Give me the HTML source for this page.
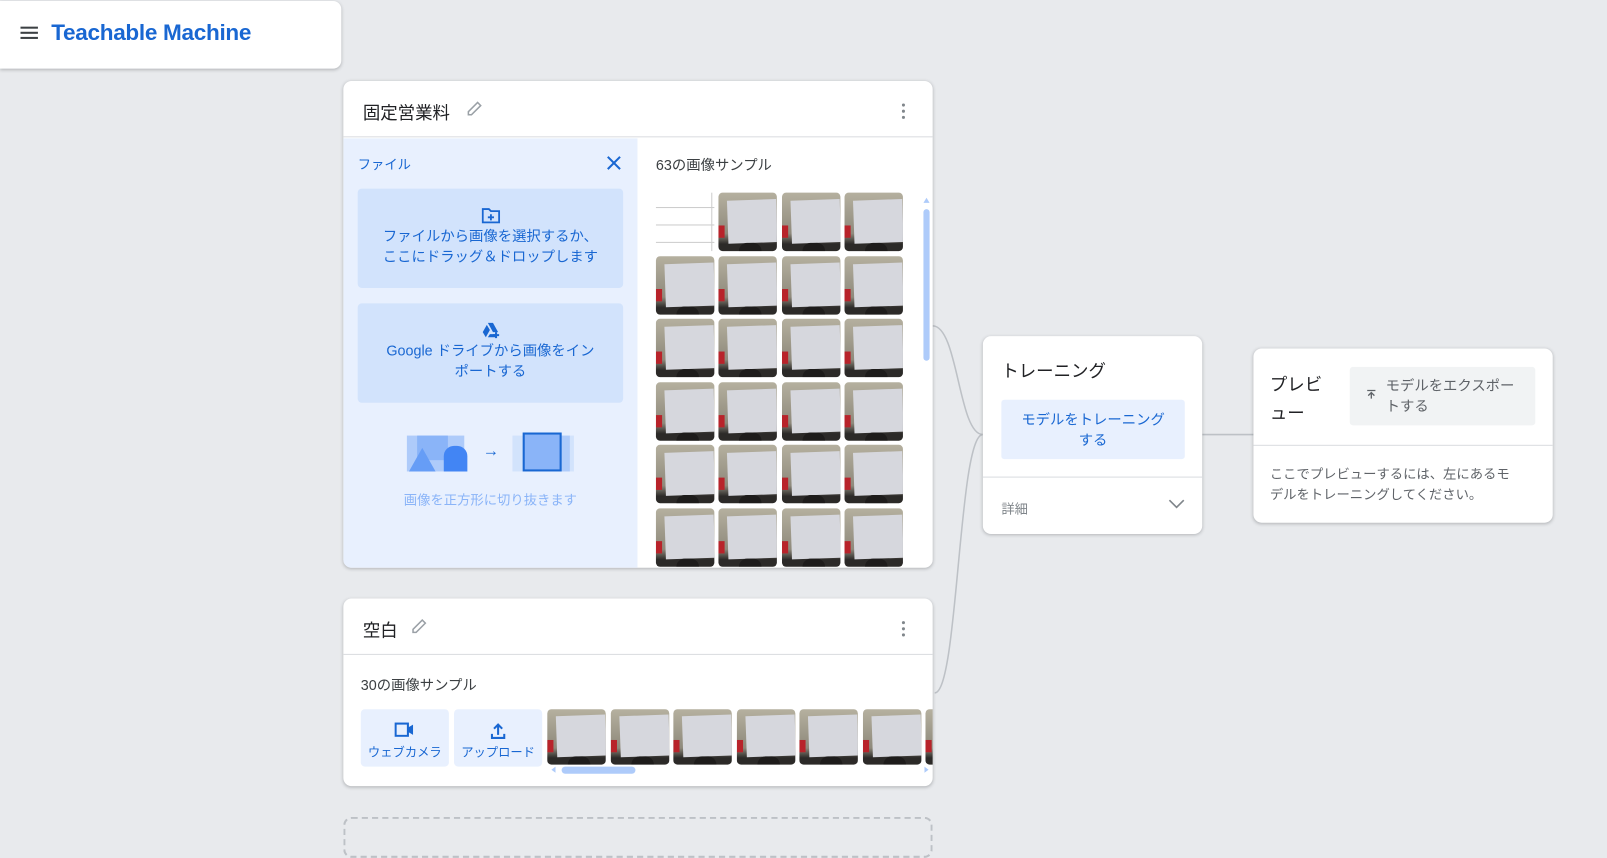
<!DOCTYPE html>
<html><head><meta charset="utf-8"><style>
*{box-sizing:border-box;margin:0;padding:0}
body{width:1607px;height:824px;background:#e8eaed;font-family:"Liberation Sans","Noto Sans CJK JP",sans-serif;position:relative;overflow:hidden;color:#202124}
#w{position:absolute;left:0;top:0;width:1568px;height:804px;transform:scale(1.0249);transform-origin:0 0}
.card{position:absolute;background:#fff;border-radius:8px;box-shadow:0 1px 3px rgba(60,64,67,.3)}
.thumb{position:absolute;width:57px;height:57px;border-radius:4px;overflow:hidden;background:linear-gradient(#b5b09f,#8f8a7c 70%,#2c2a28 88%)}
.thumb:before{content:"";position:absolute;left:16%;top:12%;width:84%;height:74%;background:#d6d7dd;transform:rotate(-2deg)}
.thumb:after{content:"";position:absolute;left:0;top:56%;width:6px;height:12px;background:#b8232a}
.thumb i{position:absolute;left:20px;bottom:0;width:22px;height:8px;background:#1e1c1b;border-radius:10px 10px 0 0}
.hd{position:absolute;left:0;right:0;top:0;height:55px;border-bottom:1px solid #dadce0}
.dots{position:absolute;right:26px;top:22px;width:4px}
.dots b{display:block;width:3px;height:3px;background:#80868b;border-radius:50%;margin-bottom:3px}
</style></head><body><div id="w">

<div class="card" style="left:0;top:1px;width:333px;height:66px;border-radius:0 8px 8px 0">
 <div style="position:absolute;left:20px;top:25px;width:17px">
  <div style="height:2px;background:#3c4043;margin-bottom:3px"></div><div style="height:2px;background:#3c4043;margin-bottom:3px"></div><div style="height:2px;background:#3c4043"></div></div>
 <div style="position:absolute;left:50px;top:18px;font-size:22px;font-weight:bold;color:#1967d2;letter-spacing:-0.3px">Teachable Machine</div>
</div>

<svg style="position:absolute;left:0;top:0" width="1607" height="824">
 <path d="M910 318 C935 318,935 424,959 424 M912 676 C935 676,935 424,959 424" stroke="#bdc1c6" stroke-width="1.5" fill="none"/>
 <path d="M1173 424 L1223 424" stroke="#bdc1c6" stroke-width="1.5"/>
</svg>

<div class="card" style="left:335px;top:79px;width:575px;height:475px;overflow:hidden">
 <div class="hd"><div style="position:absolute;left:19px;top:17px;font-size:17px">固定営業料</div>
  <svg style="position:absolute;left:119px;top:18px" width="18" height="18" viewBox="0 0 18 18"><path d="M3 15 L3 12 L12 3 L15 6 L6 15 Z" fill="none" stroke="#9aa0a6" stroke-width="1.5"/></svg>
  <div class="dots"><b></b><b></b><b></b></div></div>
 <div style="position:absolute;left:0;top:56px;width:287px;height:419px;background:#e8f0fe">
  <div style="position:absolute;left:14px;top:15px;font-size:13px;color:#1967d2">ファイル</div>
  <svg style="position:absolute;left:257px;top:17px" width="14" height="14"><path d="M1 1L13 13M13 1L1 13" stroke="#1967d2" stroke-width="2"/></svg>
  <div style="position:absolute;left:14px;top:49px;width:259px;height:97px;background:#d2e3fc;border-radius:4px;text-align:center;color:#1967d2;font-size:14px;line-height:20px;padding-top:18px">
   <svg width="18" height="16" viewBox="0 0 18 16" style="display:block;margin:0 auto 2px"><path d="M1 2h6l2 2h8v11H1z" fill="none" stroke="#1967d2" stroke-width="1.8"/><path d="M9 7v6M6 10h6" stroke="#1967d2" stroke-width="1.8"/></svg>
   ファイルから画像を選択するか、<br>ここにドラッグ＆ドロップします</div>
  <div style="position:absolute;left:14px;top:161px;width:259px;height:97px;background:#d2e3fc;border-radius:4px;text-align:center;color:#1967d2;font-size:14px;line-height:20px;padding-top:18px">
   <svg width="18" height="16" viewBox="0 0 18 16" style="display:block;margin:0 auto 2px"><path d="M6 1h5l5 9h-5zM5 3l3 5-4 7-3-5zM8 12h6v3H6z" fill="#1967d2"/><path d="M14 10v6M11 13h6" stroke="#1967d2" stroke-width="2"/></svg>
   Google ドライブから画像をイン<br>ポートする</div>
  <div style="position:absolute;left:62px;top:290px;width:56px;height:35px;background:#aecbfa"></div>
  <div style="position:absolute;left:72px;top:290px;width:30px;height:24px;background:#8ab4f8"></div>
  <div style="position:absolute;left:64px;top:302px;width:0;height:0;border-left:13px solid transparent;border-right:13px solid transparent;border-bottom:23px solid #669df6"></div>
  <div style="position:absolute;left:98px;top:300px;width:23px;height:25px;background:#4285f4;border-radius:10px 10px 0 0"></div>
  <div style="position:absolute;left:136px;top:297px;font-size:16px;color:#1967d2">→</div>
  <div style="position:absolute;left:165px;top:290px;width:60px;height:35px;background:#d2e3fc"></div>
  <div style="position:absolute;left:176px;top:290px;width:45px;height:35px;background:#aecbfa"></div>
  <div style="position:absolute;left:175px;top:287px;width:38px;height:38px;border:2px solid #1967d2;background:#8ab4f8"></div>
  <div style="position:absolute;left:0;width:287px;text-align:center;top:342px;font-size:13px;color:#8ab4f8">画像を正方形に切り抜きます</div>
 </div>
 <div style="position:absolute;left:305px;top:72px;font-size:14px;color:#3c4043">63の画像サンプル</div>
 <div style="position:absolute;left:305px;top:109px;width:57px;height:57px;background:#fff">
  <div style="position:absolute;left:0;top:14px;width:57px;border-top:1px solid #ccc"></div>
  <div style="position:absolute;left:0;top:31px;width:57px;border-top:1px solid #ccc"></div>
  <div style="position:absolute;left:0;top:48px;width:57px;border-top:1px solid #ccc"></div>
  <div style="position:absolute;left:54px;top:0;height:57px;border-left:1px solid #ccc"></div></div>
 <div id="g"></div>
 <div style="position:absolute;left:566px;top:125px;width:6px;height:148px;background:#aecbfa;border-radius:3px"></div>
 <div style="position:absolute;left:566px;top:114px;width:0;height:0;border-left:3px solid transparent;border-right:3px solid transparent;border-bottom:5px solid #aecbfa"></div>
</div>

<div class="card" style="left:335px;top:584px;width:575px;height:183px;overflow:hidden">
 <div class="hd"><div style="position:absolute;left:19px;top:17px;font-size:17px">空白</div>
  <svg style="position:absolute;left:65px;top:18px" width="18" height="18" viewBox="0 0 18 18"><path d="M3 15 L3 12 L12 3 L15 6 L6 15 Z" fill="none" stroke="#9aa0a6" stroke-width="1.5"/></svg>
  <div class="dots"><b></b><b></b><b></b></div></div>
 <div style="position:absolute;left:17px;top:74px;font-size:14px;color:#3c4043">30の画像サンプル</div>
 <div style="position:absolute;left:17px;top:108px;width:86px;height:56px;background:#e8f0fe;border-radius:4px;text-align:center;color:#1967d2;font-size:12px;padding-top:13px">
  <svg width="20" height="14" viewBox="0 0 20 14" style="display:block;margin:0 auto 6px"><rect x="1" y="1" width="12" height="12" fill="none" stroke="#1967d2" stroke-width="2"/><path d="M13 5l5-3v10l-5-3z" fill="#1967d2"/></svg>ウェブカメラ</div>
 <div style="position:absolute;left:108px;top:108px;width:86px;height:56px;background:#e8f0fe;border-radius:4px;text-align:center;color:#1967d2;font-size:12px;padding-top:13px">
  <svg width="16" height="16" viewBox="0 0 16 16" style="display:block;margin:0 auto 4px"><path d="M8 12V2M4 6l4-4 4 4M2 11v4h12v-4" fill="none" stroke="#1967d2" stroke-width="2"/></svg>アップロード</div>
 <div id="h"></div>
 <div style="position:absolute;left:213px;top:164px;width:72px;height:7px;background:#aecbfa;border-radius:4px"></div>
 <div style="position:absolute;left:203px;top:164px;border-top:3px solid transparent;border-bottom:3px solid transparent;border-right:4px solid #aecbfa"></div>
 <div style="position:absolute;left:567px;top:164px;border-top:3px solid transparent;border-bottom:3px solid transparent;border-left:4px solid #aecbfa"></div>
</div>

<div style="position:absolute;left:335px;top:797px;width:575px;height:40px;border:2px dashed #bdc1c6;border-radius:8px"></div>

<div class="card" style="left:959px;top:328px;width:214px;height:193px">
 <div style="position:absolute;left:18px;top:20px;font-size:17px">トレーニング</div>
 <div style="position:absolute;left:18px;top:62px;width:179px;height:58px;background:#e8f0fe;border-radius:3px;color:#1967d2;font-size:14px;text-align:center;line-height:20px;padding-top:9px">モデルをトレーニング<br>する</div>
 <div style="position:absolute;left:0;right:0;top:137px;border-top:1px solid #dadce0"></div>
 <div style="position:absolute;left:18px;top:158px;font-size:13px;color:#80868b">詳細</div>
 <svg style="position:absolute;left:181px;top:159px" width="16" height="10"><path d="M1 1l7 7 7-7" fill="none" stroke="#80868b" stroke-width="1.6"/></svg>
</div>

<div class="card" style="left:1223px;top:340px;width:292px;height:170px">
 <div style="position:absolute;left:16px;top:22px;font-size:17px;line-height:28px">プレビ<br>ュー</div>
 <div style="position:absolute;left:94px;top:18px;width:181px;height:57px;background:#f1f3f4;border-radius:3px;color:#5f6368;font-size:14px;line-height:20px;padding:8px 0 0 35px">モデルをエクスポー<br>トする
  <svg style="position:absolute;left:16px;top:22px" width="10" height="10"><path d="M1 1h8M5 9V3M2 6l3-3 3 3" fill="none" stroke="#5f6368" stroke-width="1.3"/></svg></div>
 <div style="position:absolute;left:0;right:0;top:94px;border-top:1px solid #dadce0"></div>
 <div style="position:absolute;left:16px;top:113px;font-size:13px;line-height:20px;color:#5f6368">ここでプレビューするには、左にあるモ<br>デルをトレーニングしてください。</div>
</div>

</div>
<script>
var g=document.getElementById('g'),s='';
var xs=[305,366,428,489],ys=[109,171,232,294,355,417];
for(var r=0;r<6;r++)for(var c=0;c<4;c++){if(r==0&&c==0)continue;s+='<div class="thumb" style="left:'+xs[c]+'px;top:'+ys[r]+'px"><i></i></div>';}
g.innerHTML=s;
var h=document.getElementById('h');s='';
for(var i=0;i<7;i++)s+='<div class="thumb" style="left:'+(199+i*61.5)+'px;top:108px;height:54px"><i></i></div>';
h.innerHTML=s;
</script>
</body></html>
